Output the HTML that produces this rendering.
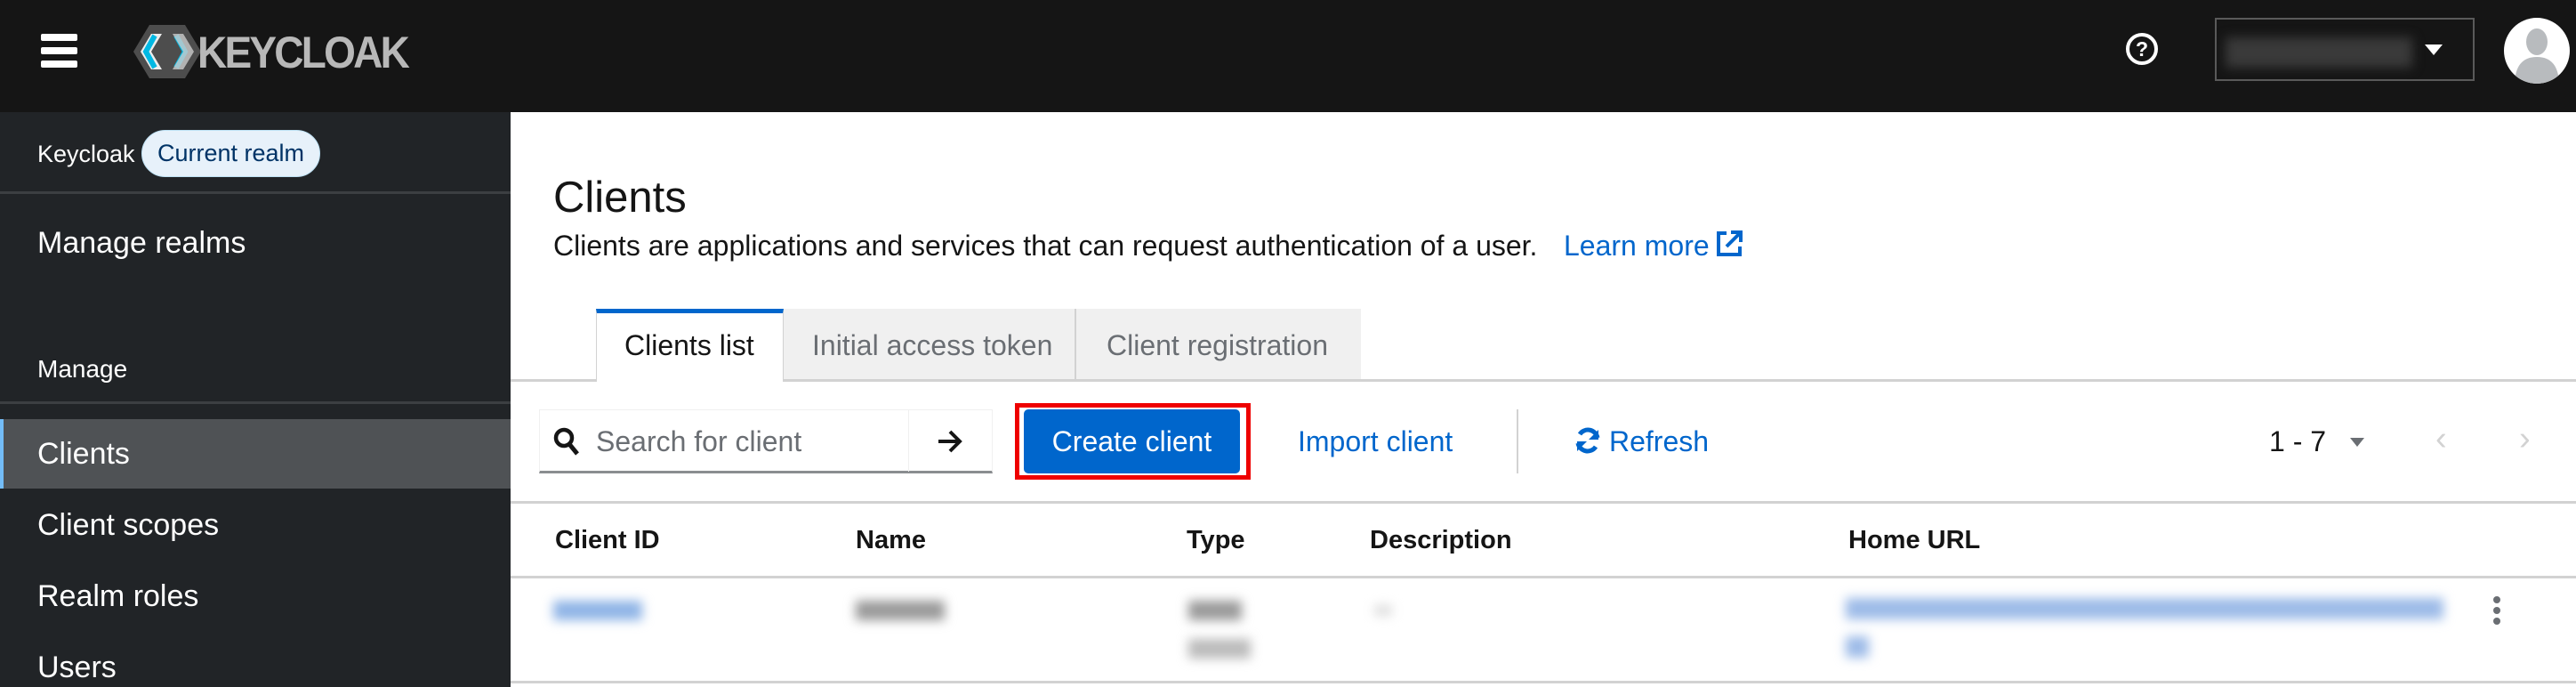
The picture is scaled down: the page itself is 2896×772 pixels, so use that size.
<!DOCTYPE html>
<html><head><meta charset="utf-8"><style>
*{box-sizing:border-box;margin:0;padding:0}
body{width:2896px;height:772px;overflow:hidden;font-family:"Liberation Sans",sans-serif;background:#fff;position:relative;color:#151515}
.a{position:absolute;white-space:nowrap}
.hdr{left:0;top:0;width:2896px;height:126px;background:#151515}
.side{left:0;top:126px;width:574px;height:646px;background:#212427;color:#fff}
.blur{filter:blur(6px)}
</style></head><body>
<div class="a hdr">
  <div class="a" style="left:46px;top:38px;width:41px;height:8px;background:#fff;border-radius:2px"></div>
  <div class="a" style="left:46px;top:53px;width:41px;height:8px;background:#fff;border-radius:2px"></div>
  <div class="a" style="left:46px;top:68px;width:41px;height:8px;background:#fff;border-radius:2px"></div>
  <svg class="a" style="left:148px;top:26px" width="80" height="64" viewBox="0 0 80 64">
    <polygon points="20,2 60,2 78,32 60,62 20,62 2,32" fill="#4d4d4d"/>
    <polygon points="10,32 22,12 34,12 22,32 34,52 22,52" fill="#fff" opacity=".9"/>
    <path d="M26 14 L16 32 L26 50" stroke="#00b8e3" stroke-width="6" fill="none"/>
    <path d="M50 14 L60 32 L50 50" stroke="#00b8e3" stroke-width="6" fill="none"/>
    <polygon points="46,12 58,12 70,32 58,52 46,52 58,32" fill="#ccc" opacity=".8"/>
  </svg>
  <div class="a" style="left:222px;top:30px;font-size:50px;font-weight:bold;color:#b8b8b8;letter-spacing:-3px;transform:scaleX(.92);transform-origin:left">KEYCLOAK</div>
  <svg class="a" style="left:2388px;top:35px" width="40" height="40" viewBox="0 0 40 40"><circle cx="20" cy="20" r="16" fill="none" stroke="#fff" stroke-width="4"/><text x="20" y="28" font-size="23" font-weight="bold" fill="#fff" text-anchor="middle" font-family="Liberation Sans">?</text></svg>
  <div class="a" style="left:2490px;top:20px;width:292px;height:71px;border:2px solid #5a5a5a"></div>
  <div class="a blur" style="left:2502px;top:42px;width:210px;height:34px;background:#3a3a3a"></div>
  <div class="a" style="left:2726px;top:50px;width:0;height:0;border-left:10px solid transparent;border-right:10px solid transparent;border-top:12px solid #fff"></div>
  <svg class="a" style="left:2813px;top:18px" width="78" height="78" viewBox="0 0 78 78"><clipPath id="c"><circle cx="39" cy="39" r="37"/></clipPath><circle cx="39" cy="39" r="37" fill="#fff"/><g clip-path="url(#c)" fill="#b8bbbe"><ellipse cx="39" cy="29" rx="12" ry="15"/><path d="M14 78 Q14 46 39 46 Q64 46 64 78Z"/></g></svg>
</div>
<div class="a side">
  <div class="a" style="left:42px;top:32px;font-size:27px">Keycloak</div>
  <div class="a" style="left:159px;top:20px;width:201px;height:53px;border-radius:27px;background:#e7f1fa;border:1px solid #bee1f4;color:#003366;font-size:27px;line-height:51px;text-align:center">Current realm</div>
  <div class="a" style="left:0;top:89px;width:574px;height:3px;background:#3c3f42"></div>
  <div class="a" style="left:42px;top:128px;font-size:34px">Manage realms</div>
  <div class="a" style="left:42px;top:273px;font-size:28px">Manage</div>
  <div class="a" style="left:0;top:325px;width:574px;height:3px;background:#3c3f42"></div>
  <div class="a" style="left:0;top:345px;width:574px;height:78px;background:#4f5255;border-left:4px solid #73bcf7"></div>
  <div class="a" style="left:42px;top:365px;font-size:34px">Clients</div>
  <div class="a" style="left:42px;top:445px;font-size:34px">Client scopes</div>
  <div class="a" style="left:42px;top:525px;font-size:34px">Realm roles</div>
  <div class="a" style="left:42px;top:605px;font-size:34px">Users</div>
</div>
<div class="a" style="left:622px;top:194px;font-size:49px">Clients</div>
<div class="a" style="left:622px;top:258px;font-size:32px">Clients are applications and services that can request authentication of a user.</div>
<div class="a" style="left:1758px;top:258px;font-size:32px;color:#0066cc">Learn more</div>
<svg class="a" style="left:1927px;top:257px" width="34" height="34" viewBox="0 0 34 34"><path d="M14 5H5v24h24v-9" stroke="#0066cc" stroke-width="4" fill="none"/><path d="M14 20L29 5M19 4h11v11" stroke="#0066cc" stroke-width="4" fill="none"/></svg>
<div class="a" style="left:574px;top:426px;width:2322px;height:3px;background:#d2d2d2"></div>
<div class="a" style="left:670px;top:347px;width:211px;height:82px;background:#fff;border-top:5px solid #0066cc;border-left:1px solid #d2d2d2;border-right:1px solid #d2d2d2"></div>
<div class="a" style="left:702px;top:370px;font-size:32px">Clients list</div>
<div class="a" style="left:881px;top:347px;width:329px;height:79px;background:#f0f0f0;border-right:2px solid #d2d2d2"></div>
<div class="a" style="left:913px;top:370px;font-size:32px;color:#6a6e73">Initial access token</div>
<div class="a" style="left:1210px;top:347px;width:320px;height:79px;background:#f0f0f0"></div>
<div class="a" style="left:1244px;top:370px;font-size:32px;color:#6a6e73">Client registration</div>
<div class="a" style="left:606px;top:460px;width:510px;height:72px;border:1px solid #f0f0f0;border-bottom:3px solid #8a8d90"></div>
<div class="a" style="left:1021px;top:460px;width:1px;height:70px;background:#f0f0f0"></div>
<svg class="a" style="left:622px;top:480px" width="30" height="32" viewBox="0 0 30 32"><circle cx="12" cy="12" r="9" fill="none" stroke="#151515" stroke-width="4.5"/><path d="M18 19l9 11" stroke="#151515" stroke-width="5"/></svg>
<div class="a" style="left:670px;top:478px;font-size:32px;color:#6a6e73">Search for client</div>
<svg class="a" style="left:1052px;top:481px" width="32" height="30" viewBox="0 0 32 30"><path d="M3 15h24M16 4l11 11-11 11" stroke="#151515" stroke-width="4" fill="none"/></svg>
<div class="a" style="left:1141px;top:453px;width:265px;height:86px;border:5px solid #ee0000"></div>
<div class="a" style="left:1151px;top:460px;width:243px;height:72px;background:#0066cc;border-radius:5px;color:#fff;font-size:32px;line-height:72px;text-align:center">Create client</div>
<div class="a" style="left:1459px;top:478px;font-size:32px;color:#0066cc">Import client</div>
<div class="a" style="left:1705px;top:460px;width:2px;height:72px;background:#d2d2d2"></div>
<svg class="a" style="left:1769px;top:479px" width="32" height="32" viewBox="0 0 32 32"><path d="M27 13A11 11 0 0 0 7 9" stroke="#0066cc" stroke-width="5" fill="none"/><path d="M5 19a11 11 0 0 0 20 4" stroke="#0066cc" stroke-width="5" fill="none"/><path d="M28 4v11H17z" fill="#0066cc"/><path d="M4 28V17h11z" fill="#0066cc"/></svg>
<div class="a" style="left:1809px;top:478px;font-size:32px;color:#0066cc">Refresh</div>
<div class="a" style="left:2551px;top:478px;font-size:32px">1 - 7</div>
<div class="a" style="left:2642px;top:492px;width:0;height:0;border-left:8px solid transparent;border-right:8px solid transparent;border-top:10px solid #6a6e73"></div>
<div class="a" style="left:2738px;top:472px;font-size:38px;color:#d2d2d2">‹</div>
<div class="a" style="left:2832px;top:472px;font-size:38px;color:#d2d2d2">›</div>
<div class="a" style="left:574px;top:563px;width:2322px;height:3px;background:#d2d2d2"></div>
<div class="a" style="left:624px;top:591px;font-size:29px;font-weight:bold">Client ID</div>
<div class="a" style="left:962px;top:591px;font-size:29px;font-weight:bold">Name</div>
<div class="a" style="left:1334px;top:591px;font-size:29px;font-weight:bold">Type</div>
<div class="a" style="left:1540px;top:591px;font-size:29px;font-weight:bold">Description</div>
<div class="a" style="left:2078px;top:591px;font-size:29px;font-weight:bold">Home URL</div>
<div class="a" style="left:574px;top:647px;width:2322px;height:3px;background:#d2d2d2"></div>
<div class="a blur" style="left:622px;top:675px;width:100px;height:22px;background:#8fb4e6"></div>
<div class="a blur" style="left:962px;top:675px;width:100px;height:22px;background:#999"></div>
<div class="a blur" style="left:1336px;top:675px;width:60px;height:22px;background:#999"></div>
<div class="a blur" style="left:1336px;top:718px;width:70px;height:22px;background:#bbb"></div>
<div class="a blur" style="left:1545px;top:680px;width:20px;height:12px;background:#ddd"></div>
<div class="a blur" style="left:2075px;top:672px;width:672px;height:24px;background:#9dbbe8"></div>
<div class="a blur" style="left:2075px;top:715px;width:26px;height:24px;background:#9dbbe8"></div>
<div class="a" style="left:2803px;top:670px;width:8px;height:8px;border-radius:50%;background:#6a6e73"></div>
<div class="a" style="left:2803px;top:682px;width:8px;height:8px;border-radius:50%;background:#6a6e73"></div>
<div class="a" style="left:2803px;top:694px;width:8px;height:8px;border-radius:50%;background:#6a6e73"></div>
<div class="a" style="left:574px;top:765px;width:2322px;height:3px;background:#d2d2d2"></div>
</body></html>
